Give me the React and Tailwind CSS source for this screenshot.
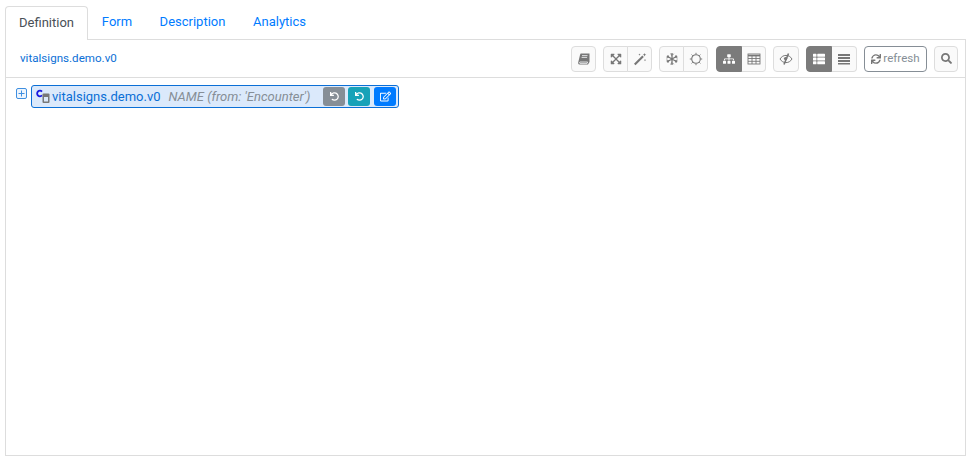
import { FaExpandArrowsAlt, FaSitemap, FaThList, FaSync, FaSearch, FaUndo, FaRegEdit } from 'react-icons/fa'

function BookIcon() {
  return (
    <svg width="14" height="14" viewBox="0 0 14 14">
      <path d="M4 1.500h8.500v8.500L11 12.500H2.500C1.200 12.500 1 11 1.300 10L3 3c.2-.8.5-1.500 1-1.500z" fill="#777" />
      <path d="M3 10h7.600l-.5 1.400H3c-.6 0-.6-1.400 0-1.400zM5 3.600h5.500M4.600 5.400h5.500" stroke="#f8f9fa" strokeWidth="0.8" fill="none" />
    </svg>
  )
}

function WandIcon() {
  return (
    <svg width="14" height="14" viewBox="0 0 14 14" fill="#777">
      <path d="M1 11.800 9.300 3.500l1.500 1.500L2.500 13.300z" />
      <path d="M11.500 1l.5 1.300 1.300.5-1.300.5-.5 1.300-.5-1.300-1.300-.5 1.300-.5zM6.500 1.500l.3.8.8.3-.8.3-.3.8-.3-.8-.8-.3.8-.3zM12 7l.3.8.8.3-.8.3-.3.8-.3-.8-.8-.3.8-.3z" />
    </svg>
  )
}

function SnowIcon() {
  return (
    <svg width="14" height="14" viewBox="0 0 14 14" stroke="#777" strokeWidth="1.300" fill="none">
      <path d="M7 1v12M1.800 4l10.400 6M1.800 10l10.400-6" />
      <path d="M5.400 1.800 7 3.400l1.600-1.600M5.400 12.200 7 10.600l1.600 1.600M1.400 6l2.200-.6L3 3.200M12.600 8l-2.200.6.6 2.200M3 10.800l.6-2.200-2.200-.6M11 3.200l-.6 2.200 2.200.6" strokeWidth="1" />
    </svg>
  )
}

function SunIcon() {
  return (
    <svg width="14" height="14" viewBox="0 0 14 14" stroke="#777" fill="none">
      <circle cx="7" cy="7" r="4.300" strokeWidth="1.100" />
      <path d="M7 .8v1.600M7 11.600v1.600M.8 7h1.600M11.600 7h1.600M2.600 2.600l1.100 1.100M10.300 10.300l1.100 1.100M2.600 11.400l1.100-1.100M10.300 3.700l1.100-1.100" strokeWidth="1" />
    </svg>
  )
}

function TableIcon() {
  return (
    <svg width="14" height="14" viewBox="0 0 14 14" stroke="#777" strokeWidth="0.9" fill="none">
      <rect x="1" y="2" width="12" height="10" />
      <path d="M1 3.600h12" strokeWidth="1.600" />
      <path d="M1 6.500h12M1 9.300h12M5 3v9M9 3v9" />
    </svg>
  )
}

function EyeSlashIcon() {
  return (
    <svg width="14" height="14" viewBox="0 0 14 14" stroke="#777" fill="none">
      <path d="M1 7c1.500-2.400 3.500-3.600 6-3.600S11.500 4.600 13 7c-1.500 2.400-3.500 3.600-6 3.600S2.500 9.400 1 7z" strokeWidth="1" />
      <path d="M9.500 1.500 5 12.500" strokeWidth="1.600" />
      <circle cx="6.600" cy="6.600" r="1.700" fill="#777" stroke="none" />
    </svg>
  )
}

function BarsIcon() {
  return (
    <svg width="14" height="14" viewBox="0 0 14 14" fill="#777">
      <rect x="1" y="2" width="12" height="2" />
      <rect x="1" y="5" width="12" height="2" />
      <rect x="1" y="8" width="12" height="2" />
      <rect x="1" y="11" width="12" height="1.500" />
    </svg>
  )
}

function ToolBtn({ active, className = 'w-[25px]', children }) {
  return (
    <button
      className={`flex h-[26px] items-center justify-center border ${active ? 'border-[#7b7b7b] bg-[#7b7b7b] text-white' : 'border-[#dddddd] bg-[#fafafa] text-[#777777]'} ${className}`}
    >
      {children}
    </button>
  )
}

function NodeBtn({ className, children }) {
  return (
    <button className={`flex h-[19px] w-[22px] items-center justify-center rounded-[3px] text-white ${className}`}>
      {children}
    </button>
  )
}

export default function App() {
  return (
    <div className="h-[461px] w-[971px] overflow-hidden bg-white px-[5px] pt-[6px] font-['Roboto',sans-serif] text-[13px]">
      <div className="relative z-10 flex h-[34px]">
        <div className="flex h-[34px] w-[83px] items-center justify-center rounded-t-[4px] border border-b-0 border-[#dddddd] bg-white pb-[2px] text-[#495057]">Definition</div>
        <div className="flex w-[58px] items-center justify-center pb-[2px] text-[#007bff]">Form</div>
        <div className="flex w-[93px] items-center justify-center pb-[2px] text-[#007bff]">Description</div>
        <div className="flex w-[80px] items-center justify-center pb-[2px] pl-[1px] text-[#007bff]">Analytics</div>
      </div>
      <div className="-mt-px h-[417px] w-[961px] border border-[#dddddd]">
        <div className="flex h-[38px] items-center border-b border-[#dddddd] pl-[14px] pr-[7px]">
          <span className="text-[11.6px] text-[#0b6fd6]">vitalsigns.demo.v0</span>
          <div className="ml-auto flex items-center">
            <ToolBtn className="w-[25px] rounded-[4px]"><BookIcon /></ToolBtn>
            <div className="ml-[7px] flex">
              <ToolBtn className="w-[25px] rounded-l-[4px]"><FaExpandArrowsAlt size={12} /></ToolBtn>
              <ToolBtn className="-ml-px w-[25px] rounded-r-[4px]"><WandIcon /></ToolBtn>
            </div>
            <div className="ml-[7px] flex">
              <ToolBtn className="w-[25px] rounded-l-[4px]"><SnowIcon /></ToolBtn>
              <ToolBtn className="-ml-px w-[25px] rounded-r-[4px]"><SunIcon /></ToolBtn>
            </div>
            <div className="ml-[8px] flex">
              <ToolBtn active className="w-[26px] rounded-l-[4px]"><FaSitemap size={12} /></ToolBtn>
              <ToolBtn className="w-[24px] rounded-r-[4px] border-l-0"><TableIcon /></ToolBtn>
            </div>
            <ToolBtn className="ml-[7px] w-[26px] rounded-[4px]"><EyeSlashIcon /></ToolBtn>
            <div className="ml-[7px] flex">
              <ToolBtn active className="w-[26px] rounded-l-[4px]"><FaThList size={12} /></ToolBtn>
              <ToolBtn className="w-[25px] rounded-r-[4px] border-l-0"><BarsIcon /></ToolBtn>
            </div>
            <button className="ml-[7px] flex h-[26px] w-[63px] items-center justify-center gap-[2px] rounded-[4px] border border-[#868e96] text-[11.6px] text-[#868e96]">
              <FaSync size={10} className="text-[#777777]" />
              refresh
            </button>
            <ToolBtn className="ml-[7px] w-[24px] rounded-[4px]"><FaSearch size={11} /></ToolBtn>
          </div>
        </div>
        <div className="flex items-start pl-[11px] pt-[7px]">
          <svg width="11" height="11" viewBox="0 0 11 11" className="-ml-px mt-[3px] shrink-0" fill="none" stroke="#3f8fe0">
            <rect x="0.500" y="0.500" width="10" height="10" rx="1.500" fill="#eef5fd" />
            <path d="M2.500 5.500h6M5.500 2.500v6" />
          </svg>
          <div className="ml-[4px] flex h-[23px] w-[368px] items-center rounded-[3px] border border-[#0b6fd6] bg-[#dbe9fb] pl-[3px] pr-[2px]">
            <svg width="16" height="15" viewBox="0 0 16 15" className="shrink-0">
              <path d="M7 2.600A2.800 2.800 0 1 0 7 6.400" stroke="#1a1ae0" strokeWidth="1.800" fill="none" />
              <rect x="7.500" y="4.500" width="7" height="9.500" rx="1" fill="#777" />
              <rect x="9" y="8" width="4" height="4.500" fill="#dbe9fb" />
            </svg>
            <span className="ml-[1px] text-[13px] text-[#0b6fd6]">vitalsigns.demo.v0</span>
            <span className="ml-[8px] text-[13px] italic text-[#868e96]">NAME (from: 'Encounter')</span>
            <div className="ml-auto flex gap-[3px]">
              <NodeBtn className="bg-[#868e96]"><FaUndo size={9} /></NodeBtn>
              <NodeBtn className="bg-[#17a2b8]"><FaUndo size={9} /></NodeBtn>
              <NodeBtn className="ml-px bg-[#007bff]"><FaRegEdit size={11} /></NodeBtn>
            </div>
          </div>
        </div>
      </div>
    </div>
  )
}
